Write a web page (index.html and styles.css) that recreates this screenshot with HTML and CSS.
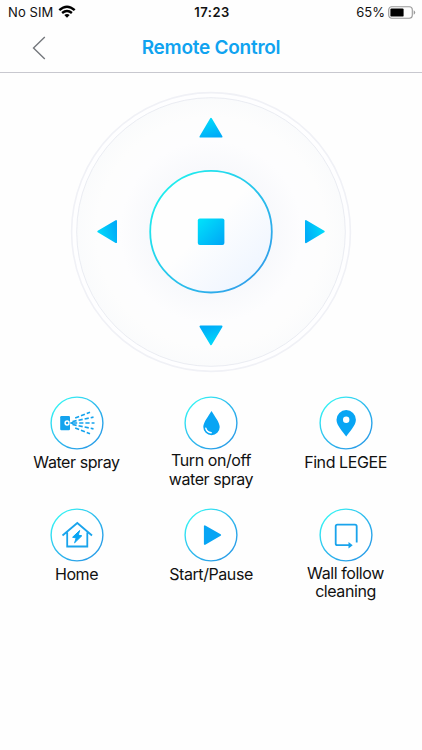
FILE: index.html
```html
<!DOCTYPE html>
<html lang="en">
<head>
<meta charset="utf-8">
<title>Remote Control</title>
<link rel="stylesheet" href="styles.css">
</head>
<body>
<div class="status">
  <div class="carrier"><span class="sim">No SIM</span>
    <svg width="18" height="14" viewBox="0 0 18 14"><g fill="none" stroke="#000" stroke-width="2.4"><path d="M1.3 5.2Q9-1.7 16.7 5.2"/><path d="M4.1 8Q9 3.8 13.9 8"/></g><path d="M6.3 10Q9 7.9 11.7 10L9 12.8Z"/></svg>
  </div>
  <div class="time">17:23</div>
  <div class="power"><span class="percent">65%</span>
    <svg width="28" height="13" viewBox="0 0 28 13"><rect x=".7" y=".7" width="23.6" height="11.6" rx="3" fill="none" stroke="#999" stroke-width="1.1"/><rect x="2.4" y="2.4" width="13.2" height="8.2" rx="1.2"/><path d="M25.7 4.3Q27.2 5 27.2 6.5T25.7 8.7Z" fill="#999"/></svg>
  </div>
</div>
<header class="nav">
  <svg class="back" width="14" height="24" viewBox="0 0 14 24"><path d="M12.8 1L1.5 12L12.8 23" fill="none" stroke="#74777c" stroke-width="1.4"/></svg>
  <h1 class="title">Remote Control</h1>
</header>
<main>
  <svg class="dial" width="284" height="284" viewBox="-142 -142 284 284">
    <defs>
      <radialGradient id="plate"><stop offset="0" stop-color="#f5f7fb"/><stop offset=".47" stop-color="#f8f9fc"/><stop offset=".68" stop-color="#fdfdfe"/><stop offset=".85" stop-color="#fdfdfd"/><stop offset="1" stop-color="#fafbfc"/></radialGradient>
      <linearGradient id="knob" x1=".15" y1=".15" x2=".85" y2=".85"><stop offset=".45" stop-color="#fefefe"/><stop offset="1" stop-color="#f0f6ff"/></linearGradient>
      <linearGradient id="rim" x1=".1" y1=".15" x2=".85" y2=".85"><stop offset="0" stop-color="#1feeee"/><stop offset="1" stop-color="#30a2ea"/></linearGradient>
      <linearGradient id="stop" x1="0" y1="0" x2="1" y2="1"><stop offset="0" stop-color="#00e4fb"/><stop offset="1" stop-color="#00a5f6"/></linearGradient>
      <linearGradient id="arrow" x1=".3" y1="0" x2=".65" y2="1"><stop offset="0" stop-color="#00dcfa"/><stop offset="1" stop-color="#00acf8"/></linearGradient>
      <path id="tri" d="M0-112.8L10.6-94.9H-10.6Z" fill="url(#arrow)" stroke="url(#arrow)" stroke-width="1.8" stroke-linejoin="round"/>
    </defs>
    <circle r="139.4" fill="#fefeff" stroke="#f0f1f6" stroke-width="1.6"/>
    <circle r="134.3" fill="url(#plate)" stroke="#e8eaf1" stroke-width=".9"/>
    <g transform="translate(0 -.4)"><use href="#tri"/><use href="#tri" transform="rotate(90)"/><use href="#tri" transform="rotate(180)"/><use href="#tri" transform="rotate(270)"/></g>
    <circle cy="-.3" r="60.8" fill="url(#knob)" stroke="url(#rim)" stroke-width="1.8"/>
    <rect x="-13.2" y="-13.6" width="26.6" height="26.6" rx="2" fill="url(#stop)"/>
  </svg>
  <section class="actions">
    <div class="action">
      <svg class="icon" viewBox="-27 -27 54 54"><circle class="ring" r="25.9"/><rect x="-16.8" y="-7" width="9.8" height="14.2" rx="1.2" fill="#14a3ee"/><circle cx="-9.9" r="2.7" fill="#fff"/><circle cx="-9.9" r="1.2" fill="#14a3ee"/><path d="M-8.2 0L-4-1.5V1.5Z" fill="#14a3ee"/><g fill="none" stroke="#14a3ee" stroke-width="1.6" stroke-dasharray="4.2 2"><path d="M-1.8-5L13-10.8"/><path d="M-4.5-1.5L16.5-5.9"/><path d="M-4 0H17.5"/><path d="M-4.5 1.5L16.5 5.9"/><path d="M-1.8 5L13 10.8"/></g></svg>
      <div class="label">Water spray</div>
    </div>
    <div class="action">
      <svg class="icon" viewBox="-27 -27 54 54"><circle class="ring" r="25.9"/><path d="M.5-12C3.2-7.2 8.7-.8 8.7 4A8.2 8.2 0 0 1-7.7 4C-7.7-.8-2.2-7.2 .5-12Z" fill="#08a5f4"/><path d="M-5.2 5.2Q-4.2 9 .2 9.7" fill="none" stroke="#fff" stroke-width="1.4" stroke-linecap="round"/></svg>
      <div class="label double">Turn on/off<br>water spray</div>
    </div>
    <div class="action">
      <svg class="icon" viewBox="-27 -27 54 54"><circle class="ring" r="25.9"/><path fill-rule="evenodd" d="M.2 13.5C-3 9-9.5 2.5-9.5-3.2A9.7 9.7 0 0 1 9.9-3.2C9.9 2.5 3.4 9 .2 13.5ZM.2-6.5A3.2 3.2 0 1 0 .2-.1A3.2 3.2 0 1 0 .2-6.5Z" fill="#08a5f4"/></svg>
      <div class="label">Find LEGEE</div>
    </div>
    <div class="action">
      <svg class="icon" viewBox="-27 -27 54 54"><circle class="ring" r="25.9"/><path d="M-14.5.5L.3-12L15 .5M-9.8-2.5V11.5H10.3V-2.5" fill="none" stroke="#1aa4ec" stroke-width="1.8"/><path d="M2.7-4.5L-4.4 2.2L-.8 3L-2.4 7.8L4.8 .8L1.2 .1Z" fill="#08a5f4" stroke="#08a5f4" stroke-linejoin="round"/></svg>
      <div class="label">Home</div>
    </div>
    <div class="action">
      <svg class="icon" viewBox="-27 -27 54 54"><circle class="ring" r="25.9"/><path d="M-6.2-8.8V8.9L9.2 0Z" fill="#08a5f4" stroke="#08a5f4" stroke-width="1.8" stroke-linejoin="round"/></svg>
      <div class="label">Start/Pause</div>
    </div>
    <div class="action">
      <svg class="icon" viewBox="-27 -27 54 54"><circle class="ring" r="25.9"/><path d="M10.7 7.5V-8.6Q10.7-10.3 9-10.3H-8.6Q-10.3-10.3-10.3-8.6V8.5Q-10.3 10.2-8.6 10.2H3" fill="none" stroke="#1aa4ec" stroke-width="1.8"/><path d="M2.5 6.9L6.7 10.2L2.5 13.5Z" fill="#14a3ee"/></svg>
      <div class="label double">Wall follow<br>cleaning</div>
    </div>
  </section>
</main>
<svg width="0" height="0" class="defs"><defs><linearGradient id="ring" x1=".1" y1=".15" x2=".75" y2=".85"><stop offset="0" stop-color="#36f2f4"/><stop offset=".5" stop-color="#30bdee"/><stop offset="1" stop-color="#2aa0e8"/></linearGradient></defs></svg>
</body>
</html>
```
FILE: styles.css
```css
* { box-sizing: border-box; }
body {
  margin: 0;
  height: 750px;
  overflow: hidden;
  background: #fefefe;
  color: #111;
  font-family: Inter, "Liberation Sans", sans-serif;
}
svg { display: block; flex: none; }
.status {
  display: grid;
  grid-template-columns: 1fr auto 1fr;
  align-items: center;
  height: 24px;
  padding: 0 6px 0 8px;
  font-size: 13px;
  line-height: 24px;
}
.carrier, .power { display: flex; align-items: center; }
.carrier { gap: 5px; }
.sim { letter-spacing: .1px; }
.power { justify-content: flex-end; gap: 3px; }
.time { font-weight: 600; letter-spacing: .5px; }
.nav {
  display: grid;
  grid-template-columns: 32px 1fr 32px;
  align-items: center;
  height: 49px;
  padding: 0 0 1px;
  border-bottom: 1px solid #c8c8cf;
}
.back { justify-self: end; transform: translateX(14px); }
.title {
  margin: 0;
  text-align: center;
  font-size: 19px;
  font-weight: 600;
  line-height: 24px;
  color: #10a3f0;
  letter-spacing: -.25px;
}
.dial { margin: 17px auto 0; }
.actions {
  display: grid;
  grid-template-columns: repeat(3, 134.5px);
  grid-template-rows: 112.5px 112.5px;
  justify-content: center;
  margin-top: 21.5px;
}
.action { display: flex; flex-direction: column; align-items: center; }
.icon { width: 54px; height: 54px; }
.ring { fill: #fff; stroke: url(#ring); stroke-width: 1.4; }
.label {
  margin-top: 3px;
  font-size: 16px;
  line-height: 18.5px;
  letter-spacing: -.42px;
  text-align: center;
  white-space: nowrap;
}
.double { margin-top: 1.5px; }
.defs { position: absolute; }
```
